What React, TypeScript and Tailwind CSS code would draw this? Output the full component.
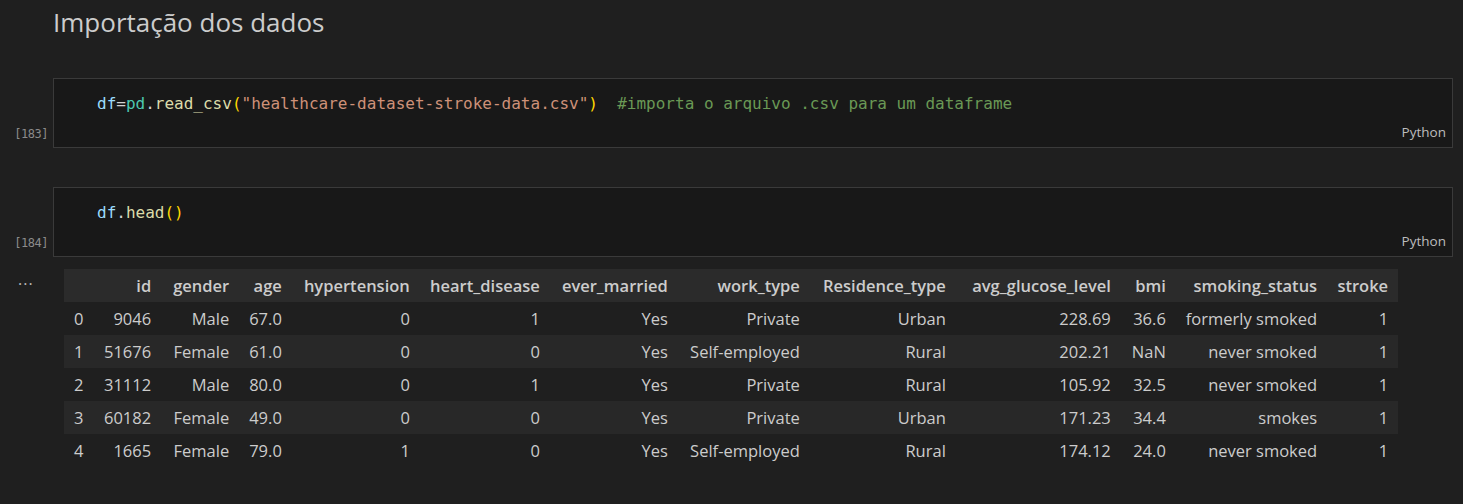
const cols = [
  { key: 'idx', label: '', w: 'w-[30px]', left: true },
  { key: 'id', label: 'id', w: 'w-[67px]' },
  { key: 'gender', label: 'gender', w: 'w-[78px]' },
  { key: 'age', label: 'age', w: 'w-[52px]' },
  { key: 'hypertension', label: 'hypertension', w: 'w-[128px]' },
  { key: 'heart_disease', label: 'heart_disease', w: 'w-[130px]' },
  { key: 'ever_married', label: 'ever_married', w: 'w-[128px]' },
  { key: 'work_type', label: 'work_type', w: 'w-[132px]' },
  { key: 'Residence_type', label: 'Residence_type', w: 'w-[146px]' },
  { key: 'avg_glucose_level', label: 'avg_glucose_level', w: 'w-[165px]' },
  { key: 'bmi', label: 'bmi', w: 'w-[55px]' },
  { key: 'smoking_status', label: 'smoking_status', w: 'w-[151px]' },
  { key: 'stroke', label: 'stroke', w: 'w-[71px]' },
];

const rows = [
  ['0', '9046', 'Male', '67.0', '0', '1', 'Yes', 'Private', 'Urban', '228.69', '36.6', 'formerly smoked', '1'],
  ['1', '51676', 'Female', '61.0', '0', '0', 'Yes', 'Self-employed', 'Rural', '202.21', 'NaN', 'never smoked', '1'],
  ['2', '31112', 'Male', '80.0', '0', '1', 'Yes', 'Private', 'Rural', '105.92', '32.5', 'never smoked', '1'],
  ['3', '60182', 'Female', '49.0', '0', '0', 'Yes', 'Private', 'Urban', '171.23', '34.4', 'smokes', '1'],
  ['4', '1665', 'Female', '79.0', '1', '0', 'Yes', 'Self-employed', 'Rural', '174.12', '24.0', 'never smoked', '1'],
];

const mono = "font-['DejaVu_Sans_Mono',monospace]";

// one code cell: gutter label + bordered editor box
const CodeCell = ({ count, children }: { count: number; children: React.ReactNode }) => (
  <div className="flex">
    <div className="w-[53px] shrink-0 flex items-end justify-end pr-[5px] pb-[5px]">
      <span className={`${mono} text-[12px] tracking-[-0.5px] text-[#8b8b8b]`}>[{count}]</span>
    </div>
    <div className="flex-1 h-[70px] mr-[10px] border border-[#3a3a3a] bg-[#181818] relative">
      <div className={`${mono} text-[16px] leading-[20px] pl-[43px] pt-[15px] whitespace-pre text-[#d4d4d4]`}>
        {children}
      </div>
      <span className="absolute right-[6px] bottom-[5px] text-[13.5px] text-[#bdbdbd]">Python</span>
    </div>
  </div>
);

export default function App() {
  return (
    <div className="w-[1463px] h-[504px] bg-[#1f1f1f] text-[#cccccc] font-['Open_Sans',sans-serif] overflow-hidden">
      <h1 className="pl-[53px] pt-[2px] h-[78px] text-[26px] leading-[40px] text-[#cccccc]">Importação dos dados</h1>

      <CodeCell count={183}>
        <span className="text-[#9cdcfe]">df</span>
        <span>=</span>
        <span className="text-[#4ec9b0]">pd</span>
        <span>.</span>
        <span className="text-[#dcdcaa]">read_csv</span>
        <span className="text-[#ffd700]">(</span>
        <span className="text-[#ce9178]">"healthcare-dataset-stroke-data.csv"</span>
        <span className="text-[#ffd700]">)</span>
        <span>{'  '}</span>
        <span className="text-[#6a9955]">#importa o arquivo .csv para um dataframe</span>
      </CodeCell>

      <div className="h-[39px]" />

      <CodeCell count={184}>
        <span className="text-[#9cdcfe]">df</span>
        <span>.</span>
        <span className="text-[#dcdcaa]">head</span>
        <span className="text-[#ffd700]">()</span>
      </CodeCell>

      <div className="flex pt-[12px]">
        <div className="w-[64px] shrink-0 pl-[18px] text-[16px] leading-[20px] tracking-[1px] text-[#b8b8b8]">...</div>
        <table className="table-fixed border-collapse text-[16.5px]">
          <thead>
            <tr className="bg-[#2b2b2b] h-[33px]">
              {cols.map((c) => (
                <th key={c.key} className={`${c.w} px-[10px] pt-[1px] font-semibold text-right whitespace-nowrap`}>
                  {c.label}
                </th>
              ))}
            </tr>
          </thead>
          <tbody>
            {rows.map((r, i) => (
              <tr key={i} className={`h-[33px] ${i % 2 === 1 ? 'bg-[#282828]' : ''}`}>
                {r.map((v, j) => (
                  <td key={j} className={`px-[10px] pt-[1px] whitespace-nowrap ${cols[j].left ? 'text-left' : 'text-right'}`}>
                    {v}
                  </td>
                ))}
              </tr>
            ))}
          </tbody>
        </table>
      </div>
    </div>
  );
}
